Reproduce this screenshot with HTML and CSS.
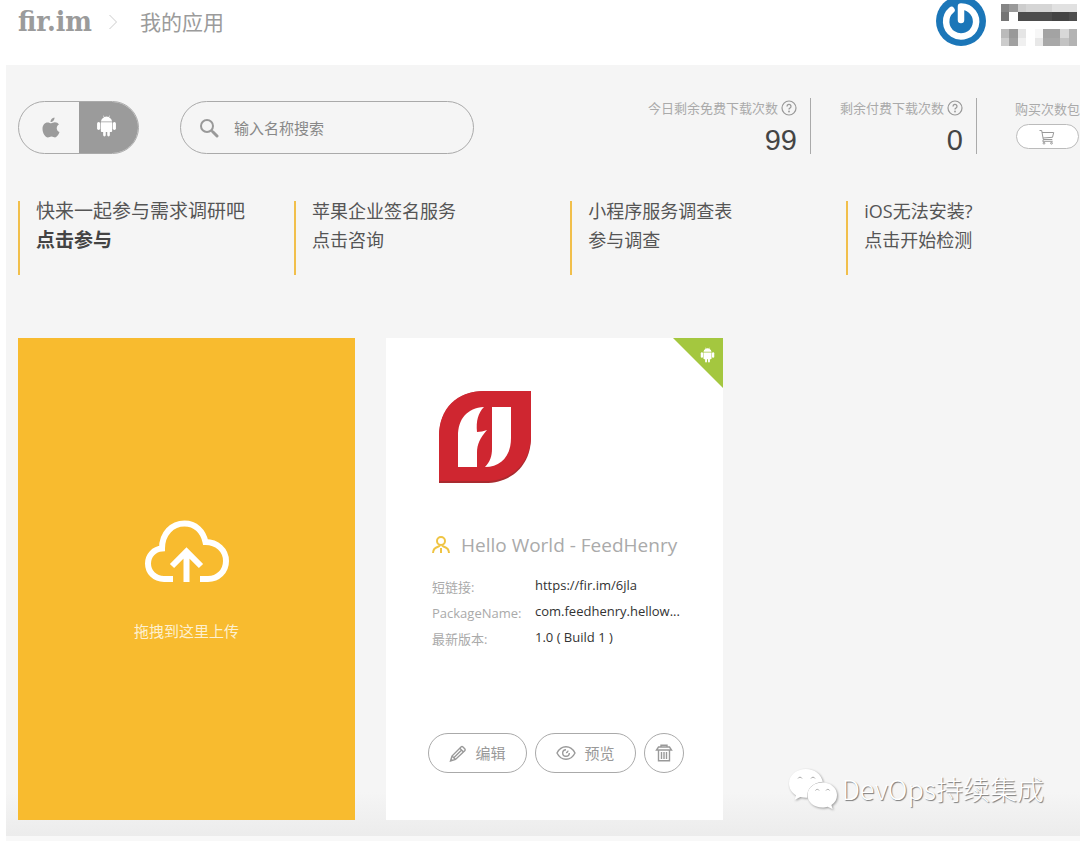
FILE: index.html
```html
<!DOCTYPE html>
<html lang="zh-CN">
<head>
<meta charset="utf-8">
<meta name="viewport" content="width=device-width, initial-scale=1">
<title>我的应用 - fir.im</title>
<link rel="stylesheet" href="styles.css">
</head>
<body>
<svg class="sprite" aria-hidden="true">
  <symbol id="android" viewBox="0 0 20 21">
    <path d="M4.600 6.300a5.400 5.400 0 0 1 3-4.100L6.700.7l.4-.3.9 1.500a6 6 0 0 1 4 0L12.900.4l.4.3-.9 1.500a5.400 5.400 0 0 1 3 4.100z"/>
    <path d="M4.600 7h10.800v8.200a1 1 0 0 1-1 1h-1.200v3a1.200 1.200 0 0 1-2.500 0v-3H9.300v3a1.200 1.200 0 0 1-2.500 0v-3H5.600a1 1 0 0 1-1-1z"/>
    <rect x="1" y="6.800" width="3" height="7.400" rx="1.500"/>
    <rect x="16" y="6.800" width="3" height="7.400" rx="1.500"/>
  </symbol>
  <symbol id="help" viewBox="0 0 16 16">
    <circle cx="8" cy="8" r="7" fill="none" stroke="currentColor" stroke-width="1.200"/>
    <path d="M6 6.400a2 2 0 1 1 2.900 1.800c-.7.3-.9.700-.9 1.300" fill="none" stroke="currentColor" stroke-width="1.300"/>
    <circle cx="8" cy="11.500" r=".9" fill="currentColor"/>
  </symbol>
</svg>

<header class="header">
  <nav class="crumbs" aria-label="位置">
    <a class="logo" href="#">fir.im</a>
    <svg class="chevron" viewBox="0 0 10 16" aria-hidden="true"><path d="M1.500 1l7 7-7 7"/></svg>
    <a class="crumb" href="#">我的应用</a>
  </nav>
  <div class="account">
    <svg class="avatar" viewBox="0 0 50 50" role="img" aria-label="头像">
      <circle cx="25" cy="25" r="25" fill="#1b76b8"/>
      <path d="M15.500 14A15 15 0 1 0 25 10.500V24" fill="none" stroke="#fff" stroke-width="6.500" stroke-linecap="round" stroke-linejoin="round"/>
    </svg>
    <svg class="mosaic" viewBox="0 0 9 5" preserveAspectRatio="none" shape-rendering="crispEdges" aria-hidden="true">
      <path fill="#858585" d="M0 0h1v1H0z"/><path fill="#999" d="M1 0h1v1H1z"/>
      <path fill="#cdcdcd" d="M2 0h1v1H2z"/><path fill="#d5d5d5" d="M3 0h3v1H3z"/><path fill="#e1e1e1" d="M6 0h3v1H6z"/>
      <path fill="#757575" d="M0 1h1v1H0z"/><path fill="#4d4d4d" d="M2 1h7v1H2z"/><path fill="#444" d="M6 1h2v1H6z"/>
      <path fill="#bababa" d="M0 3h1v1H0z"/><path fill="#999" d="M1 3h1v1H1z"/><path fill="#e5e5e5" d="M2 3h1v1H2z"/>
      <path fill="#f7f7f7" d="M4 3h1v1H4z"/><path fill="#a3a3a3" d="M5 3h2v1H5z"/><path fill="#d8d8d8" d="M7 3h1v1H7z"/><path fill="#b3b3b3" d="M8 3h1v1H8z"/>
      <path fill="#ccc" d="M0 4h1v1H0z"/><path fill="#a0a0a0" d="M1 4h1v1H1z"/><path fill="#f0f0f0" d="M2 4h1v1H2z"/>
      <path fill="#e8e8e8" d="M4 4h1v1H4z"/><path fill="#a8a8a8" d="M5 4h2v1H5z"/><path fill="#c3c3c3" d="M7 4h1v1H7z"/><path fill="#b3b3b3" d="M8 4h1v1H8z"/>
    </svg>
  </div>
</header>

<main class="main">
  <div class="toolbar">
    <div class="platforms">
      <button class="platform" type="button" aria-label="iOS">
        <svg class="apple" viewBox="0 0 18 22"><path d="M12.500.5c.2 2.400-1.700 4.500-3.900 4.600C8.300 2.900 10.300.8 12.500.5zM9.200 6.300c.9 0 2-1 3.700-1 1.700 0 3.200.9 4 2.200-3.200 1.900-2.700 6.300.6 7.600-.9 2.500-2.500 5.300-4.400 5.300-1.400 0-1.900-.8-3.600-.8s-2.200.8-3.600.8C3.300 20.400.5 16 .5 12c0-4 2.300-6.500 5.100-6.500 1.500 0 2.800.8 3.600.8z"/></svg>
      </button>
      <button class="platform platform-on" type="button" aria-label="Android" aria-pressed="true">
        <svg class="droid"><use href="#android"/></svg>
      </button>
    </div>
    <label class="search">
      <svg class="search-icon" viewBox="0 0 20 20" aria-hidden="true"><circle cx="8" cy="8" r="6"/><path d="M12.500 12.500l1.500 1.500"/><path class="handle" d="M14 14l4 4"/></svg>
      <input class="search-input" type="text" placeholder="输入名称搜索" aria-label="输入名称搜索">
    </label>
    <div class="stats">
      <div class="stat">
        <div class="stat-label">今日剩余免费下载次数<svg class="help"><use href="#help"/></svg></div>
        <div class="stat-value">99</div>
      </div>
      <div class="stat">
        <div class="stat-label">剩余付费下载次数<svg class="help"><use href="#help"/></svg></div>
        <div class="stat-value">0</div>
      </div>
      <div class="buy">
        <div class="stat-label">购买次数包</div>
        <button class="cart" type="button" aria-label="购买次数包">
          <svg class="cart-icon" viewBox="0 0 16 16"><path d="M.5 1.500h2.200l1.600 9h9M3 3.500h11.700l-1.200 4.800-9.500.7M4.500 10.500l-.8 1.800h10"/><circle cx="5" cy="14.200" r=".9"/><circle cx="12.500" cy="14.200" r=".9"/></svg>
        </button>
      </div>
    </div>
  </div>

  <section class="notices">
    <a class="notice notice-first" href="#"><span>快来一起参与需求调研吧</span><strong>点击参与</strong></a>
    <a class="notice" href="#"><span>苹果企业签名服务</span><span>点击咨询</span></a>
    <a class="notice" href="#"><span>小程序服务调查表</span><span>参与调查</span></a>
    <a class="notice" href="#"><span>iOS无法安装?</span><span>点击开始检测</span></a>
  </section>

  <section class="cards">
    <button class="upload" type="button">
      <svg class="cloud" viewBox="0 0 84 63" aria-hidden="true">
        <path d="M28 59H19C9.500 59 3 52 3 43.500 3 35.500 9 29 17 28.500 17 13.500 27 3.500 39.500 3.500c11 0 18.500 7.500 21 18.500C72 22 81 30 81 41c0 10.500-8 18-18 18h-8"/>
        <path d="M41.500 62V31M27 46l14.500-14.500L56 46"/>
      </svg>
      <span>拖拽到这里上传</span>
    </button>

    <article class="app">
      <div class="ribbon"><svg class="ribbon-icon"><use href="#android"/></svg></div>
      <svg class="app-logo" viewBox="0 0 94 94" role="img" aria-label="FeedHenry">
        <path fill="#a92a2f" d="M1 93V47C1 19 19 1 47 1h46v46c0 28-19 46-46 46z"/>
        <path fill="#cf2630" d="M1 91V46C1 18 19 1 47 1h46v44c0 28-19 46-46 46z"/>
        <path fill="#fff" d="M20 77V46c0-17 9-28 26-29-6 6-8 14-7 25 3 0 7-1 10-2-7 8-10 14-10 23v14z"/>
        <path fill="#fff" d="M54 17h19v31c0 18-10 29-26 29 5-5 7-11 7-18z"/>
      </svg>
      <h2 class="app-name">
        <svg class="user" viewBox="0 0 18 18" aria-hidden="true"><circle cx="9" cy="5" r="4"/><path d="M1 17c0-3.500 2.200-5.500 5.500-6.500L8 9.500M17 17c0-3.500-2.200-5.500-5.500-6.500L10 9.500M9 12v5"/></svg>
        <span>Hello World - FeedHenry</span>
      </h2>
      <dl class="meta">
        <dt>短链接:</dt><dd>https://fir.im/6jla</dd>
        <dt>PackageName:</dt><dd>com.feedhenry.hellow...</dd>
        <dt>最新版本:</dt><dd>1.0 ( Build 1 )</dd>
      </dl>
      <div class="actions">
        <button class="action action-edit" type="button">
          <svg class="pencil" viewBox="0 0 18 18" aria-hidden="true"><path d="M1.500 17l1.500-5L12 3a1.500 1.500 0 0 1 2 0L15.700 4.700a1.500 1.500 0 0 1 0 2L6.500 15.500zM3 12l3.500 3.500M10.800 4.200l3.700 3.700M4.800 13.800l7.800-7.800M1.500 17l1.500-1.500"/></svg>
          <span>编辑</span>
        </button>
        <button class="action action-view" type="button">
          <svg class="eye" viewBox="0 0 20 16" aria-hidden="true"><path d="M1 8c2-4 5-6.300 9-6.300S17 4 19 8c-2 4-5 6.300-9 6.300S3 12 1 8zM10 4.700A3.300 3.300 0 1 0 13.300 8M10 7.500a1.500 1.500 0 0 0 1.800-1.800"/></svg>
          <span>预览</span>
        </button>
        <button class="action action-delete" type="button" aria-label="删除">
          <svg class="trash" viewBox="0 0 18 18" aria-hidden="true"><path d="M3.500 3h11L16.500 6h-15zM6 3V1.200h6V3M3.500 6v10.800h11V6M6.500 8v7M9 8v7M11.500 8v7"/></svg>
        </button>
      </div>
    </article>
  </section>

  <div class="watermark">
    <svg class="wechat" viewBox="0 0 50 42" aria-hidden="true">
      <path d="M18 1C8 1 1 7.500 1 15.500c0 5 2.700 9 7 11.800L6.500 32l5.800-3c2 .6 4 .8 6 .8h1c-1-9 6-15.500 15.500-16C33 6 26.500 1 18 1z"/>
      <path d="M34.500 14.500C26 14.500 19.500 20 19.500 27S26 39.500 34.500 39.500c2 0 3.500-.3 5.200-.8l5 2.600-1.300-4.200c3.700-2.500 5.600-6 5.600-10.100 0-7-6.500-12.500-14.500-12.500z"/>
      <path class="eyes" d="M10 10.500a2.200 2.200 0 0 1 4 0M23 10.500a2.200 2.200 0 0 1 4 0M27.500 22.500a2 2 0 0 1 3.600 0M38 22.500a2 2 0 0 1 3.600 0"/>
    </svg>
    <span>DevOps持续集成</span>
  </div>
</main>
</body>
</html>
```
FILE: styles.css
```css
* {
  box-sizing: border-box;
}

body {
  margin: 0;
  background: #fff;
  color: #555;
  font-family: "Open Sans", "Noto Sans CJK SC", sans-serif;
  overflow-x: hidden;
}

a {
  color: inherit;
  text-decoration: none;
}

button {
  padding: 0;
  border: 0;
  background: none;
  color: inherit;
  font: inherit;
  cursor: pointer;
}

svg {
  flex: none;
}

.sprite {
  position: absolute;
  width: 0;
  height: 0;
}

/* Header */
.header {
  display: flex;
  justify-content: space-between;
  height: 65px;
  padding: 0 3px 0 18px;
}

.crumbs {
  display: flex;
  align-items: center;
  height: 44px;
}

.logo {
  color: #9b9b9b;
  font: bold 28px/32px "DejaVu Serif Condensed", "DejaVu Serif", serif;
}

.chevron {
  width: 10px;
  height: 16px;
  margin: 0 22px 0 16px;
  fill: none;
  stroke: #ccc;
}

.crumb {
  color: #9b9b9b;
  font-size: 21px;
  line-height: 32px;
}

.account {
  display: flex;
  gap: 15px;
}

.avatar {
  width: 50px;
  height: 50px;
  margin-top: -4px;
}

.mosaic {
  width: 76px;
  height: 42px;
  margin-top: 4px;
}

/* Main area */
.main {
  position: relative;
  margin-left: 6px;
  padding: 36px 0 16px 12px;
  border-bottom: 5px solid #f8f8f8;
  background: #f5f5f5 linear-gradient(#f5f5f5, #ececec) bottom / 100% 44px no-repeat;
}

.toolbar {
  display: flex;
  align-items: flex-start;
}

.platforms {
  display: flex;
  width: 121px;
  height: 53px;
  border: 1px solid #aaa;
  border-radius: 27px;
  overflow: hidden;
}

.platform {
  display: flex;
  flex: 1;
  align-items: center;
  justify-content: center;
  padding-left: 4px;
  color: #9b9b9b;
}

.platform-on {
  padding: 0 4px 4px 0;
  background: #9b9b9b;
  color: #fff;
}

.apple {
  width: 18px;
  height: 22px;
  fill: currentColor;
}

.droid {
  width: 21px;
  height: 22px;
  fill: currentColor;
}

.search {
  display: flex;
  align-items: center;
  gap: 15px;
  width: 294px;
  height: 53px;
  margin-left: 41px;
  padding: 0 18px;
  border: 1px solid #aaa;
  border-radius: 27px;
}

.search-icon {
  width: 20px;
  height: 20px;
  fill: none;
  stroke: #999;
  stroke-width: 2;
}

.handle {
  stroke-width: 3;
  stroke-linecap: round;
}

.search-input {
  flex: 1;
  min-width: 0;
  padding: 0;
  border: 0;
  outline: 0;
  background: none;
  color: #888;
  font: 15px/24px "Open Sans", "Noto Sans CJK SC", sans-serif;
}

.search-input::placeholder {
  color: #888;
  opacity: 1;
}

.stats {
  display: flex;
  align-items: flex-start;
  margin: -3px 0 0 auto;
}

.stat {
  height: 56px;
  margin-right: 29px;
  padding-right: 13px;
  border-right: 1px solid #aaa;
  text-align: right;
}

.stat-label {
  display: flex;
  align-items: center;
  gap: 3px;
  color: #aaa;
  font-size: 13px;
  line-height: 20px;
  white-space: nowrap;
}

.help {
  width: 16px;
  height: 16px;
  color: #999;
}

.stat-value {
  color: #444;
  font: 29px/44px "Liberation Sans", Arial, sans-serif;
}

.buy {
  margin-left: 9px;
  padding-top: 1px;
}

.cart {
  display: flex;
  align-items: center;
  justify-content: center;
  width: 63px;
  height: 25px;
  margin: 5px 0 0 1px;
  border: 1px solid #bbb;
  border-radius: 13px;
  background: #fff;
}

.cart-icon {
  width: 16px;
  height: 16px;
  fill: none;
  stroke: #999;
}

/* Notices */
.notices {
  display: grid;
  grid-template-columns: repeat(3, 26%) 22%;
  margin-top: 47px;
}

.notice {
  display: flex;
  flex-direction: column;
  height: 74px;
  padding-left: 16px;
  border-left: 2px solid #f1bf4b;
  font-size: 18px;
  line-height: 29px;
}

.notice span:first-child {
  margin-top: -4px;
}

.notice-first {
  font-size: 19px;
}

.notice strong {
  color: #444;
}

/* Cards */
.cards {
  display: grid;
  grid-template-columns: repeat(auto-fill, 337px);
  gap: 31px;
  margin-top: 63px;
}

.upload {
  display: flex;
  flex-direction: column;
  align-items: center;
  justify-content: center;
  gap: 36px;
  padding-top: 4px;
  background: #f8bb2f;
  color: #fdf0d0;
  font-size: 15px;
  line-height: 24px;
}

.cloud {
  width: 84px;
  height: 63px;
  fill: none;
  stroke: #fff;
  stroke-width: 6;
}

.app {
  position: relative;
  height: 482px;
  padding: 52px 41px 0 46px;
  background: #fff;
}

.ribbon {
  position: absolute;
  top: 0;
  right: 0;
  width: 50px;
  height: 50px;
  padding: 9px 0 0 27px;
  background: #a4c73f;
  clip-path: polygon(0 0, 100% 0, 100% 100%);
}

.ribbon-icon {
  display: block;
  width: 15px;
  height: 16px;
  fill: #fff;
}

.app-logo {
  display: block;
  width: 94px;
  height: 94px;
  margin-left: 6px;
}

.app-name {
  display: flex;
  align-items: center;
  gap: 11px;
  margin: 46px 0 0;
  color: #aaa;
  font-size: 19px;
  font-weight: 400;
  line-height: 30px;
  white-space: nowrap;
}

.user {
  width: 18px;
  height: 18px;
  fill: none;
  stroke: #efc443;
  stroke-width: 2;
}

.meta {
  display: grid;
  grid-template-columns: 103px 1fr;
  margin: 12px 0 0;
  font-size: 13px;
  line-height: 26px;
  white-space: nowrap;
}

.meta dt {
  padding-top: 2px;
  margin-bottom: -2px;
  color: #aaa;
}

.meta dd {
  margin: 0;
  color: #333;
}

.actions {
  display: flex;
  gap: 8px;
  margin: 83px -4px 0;
}

.action {
  display: flex;
  align-items: center;
  justify-content: center;
  gap: 8px;
  height: 40px;
  border: 1px solid #aaa;
  border-radius: 20px;
  color: #999;
  font-size: 15px;
  line-height: 36px;
}

.action-edit {
  width: 99px;
}

.action-view {
  width: 101px;
}

.action-delete {
  width: 40px;
}

.pencil,
.trash {
  width: 18px;
  height: 18px;
}

.eye {
  width: 20px;
  height: 16px;
}

.pencil,
.eye,
.trash {
  fill: none;
  stroke: #999;
  stroke-width: 1.4;
}

/* Watermark over the page corner */
.watermark {
  position: absolute;
  right: 36px;
  bottom: 26px;
  display: flex;
  align-items: center;
  gap: 4px;
  color: #fff;
  font: 300 27px/40px "Noto Sans CJK SC", sans-serif;
  text-shadow: 1px 1px 1px #777;
}

.wechat {
  width: 50px;
  height: 42px;
  fill: #fff;
  filter: drop-shadow(1px 1px 1px #999);
}

.eyes {
  fill: none;
  stroke: #aaa;
}
```
